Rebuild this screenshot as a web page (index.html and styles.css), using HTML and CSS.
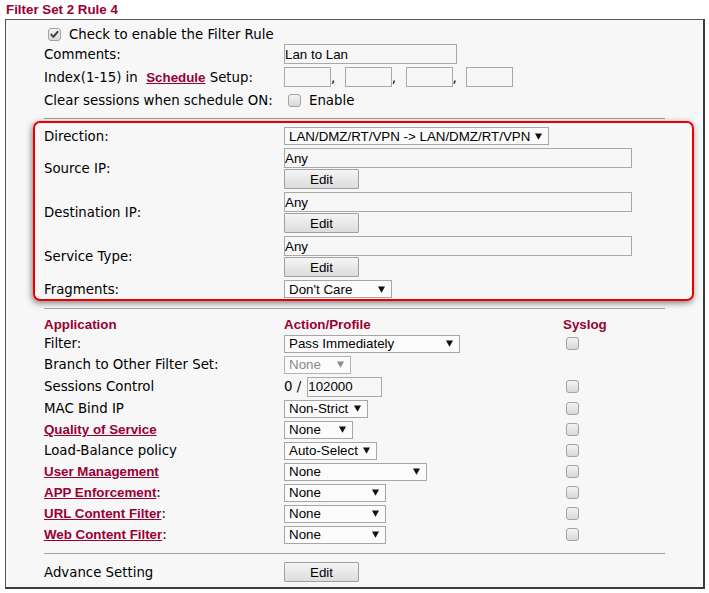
FILE: index.html
```html
<!DOCTYPE html>
<html>
<head>
<meta charset="utf-8">
<title>Filter Set 2 Rule 4</title>
<link rel="stylesheet" href="styles.css">
</head>
<body>
<div class="title">Filter Set 2 Rule 4</div>
<div class="panel">
  <div class="row-enable">
    <span class="cb"><svg width="11" height="11" viewBox="0 0 11 11"><path d="M2.3 5.6 L4.4 7.8 L8.6 2.8" fill="none" stroke="#3a3a3a" stroke-width="1.9" stroke-linecap="round" stroke-linejoin="round"/></svg></span>
    <span class="enable-text">Check to enable the Filter Rule</span>
  </div>
  <div class="grid r-comments">
    <span class="lbl">Comments:</span>
    <span class="ctl"><input class="inp w-comments" type="text" value="Lan to Lan"></span>
  </div>
  <div class="grid r-index">
    <span class="lbl">Index(1-15) in&nbsp; <a class="lnk" href="#">Schedule</a> Setup:</span>
    <span class="ctl">
      <input class="inp w-idx" type="text"><span class="comma">,</span><input class="inp w-idx" type="text"><span class="comma">,</span><input class="inp w-idx" type="text"><span class="comma">,</span><input class="inp w-idx" type="text">
    </span>
  </div>
  <div class="grid r-clear">
    <span class="lbl">Clear sessions when schedule ON:</span>
    <span class="ctl"><span class="cb cb-clear"></span><span class="enable-lbl">Enable</span></span>
  </div>
  <div class="hr hr-top"></div>

  <div class="redbox">
    <div class="grid r-dir">
      <span class="lbl">Direction:</span>
      <span class="ctl"><span class="sel w-dir"><span>LAN/DMZ/RT/VPN -&gt; LAN/DMZ/RT/VPN</span><svg class="arr" width="7" height="7" viewBox="0 0 7 7"><path d="M0 0.5 H7 L3.5 6.8 Z" fill="#111"/></svg></span></span>
    </div>
    <div class="grid r-ip r-first">
      <span class="lbl">Source IP:</span>
      <span class="ctl stack"><input class="inp w-ip" type="text" value="Any"><button class="btn" type="button">Edit</button></span>
    </div>
    <div class="grid r-ip">
      <span class="lbl">Destination IP:</span>
      <span class="ctl stack"><input class="inp w-ip" type="text" value="Any"><button class="btn" type="button">Edit</button></span>
    </div>
    <div class="grid r-ip">
      <span class="lbl">Service Type:</span>
      <span class="ctl stack"><input class="inp w-ip" type="text" value="Any"><button class="btn" type="button">Edit</button></span>
    </div>
    <div class="grid r-frag">
      <span class="lbl">Fragments:</span>
      <span class="ctl"><span class="sel w-frag"><span>Don't Care</span><svg class="arr" width="7" height="7" viewBox="0 0 7 7"><path d="M0 0.5 H7 L3.5 6.8 Z" fill="#111"/></svg></span></span>
    </div>
  </div>

  <div class="hr hr-mid"></div>

  <div class="grid3 r-head">
    <span class="hd">Application</span>
    <span class="hd">Action/Profile</span>
    <span class="hd">Syslog</span>
  </div>
  <div class="grid3 r-app">
    <span class="lbl">Filter:</span>
    <span class="ctl"><span class="sel w-filter"><span>Pass Immediately</span><svg class="arr" width="7" height="7" viewBox="0 0 7 7"><path d="M0 0.5 H7 L3.5 6.8 Z" fill="#111"/></svg></span></span>
    <span class="sys"><span class="cb"></span></span>
  </div>
  <div class="grid3 r-app">
    <span class="lbl">Branch to Other Filter Set:</span>
    <span class="ctl"><span class="sel sel-dis w-branch"><span>None</span><svg class="arr" width="7" height="7" viewBox="0 0 7 7"><path d="M0 0.5 H7 L3.5 6.8 Z" fill="#8c8c8c"/></svg></span></span>
    <span class="sys"></span>
  </div>
  <div class="grid3 r-app r-sess">
    <span class="lbl">Sessions Control</span>
    <span class="ctl"><span>0 /</span><input class="inp w-sess" type="text" value="102000"></span>
    <span class="sys"><span class="cb"></span></span>
  </div>
  <div class="grid3 r-app">
    <span class="lbl">MAC Bind IP</span>
    <span class="ctl"><span class="sel w-mac"><span>Non-Strict</span><svg class="arr" width="7" height="7" viewBox="0 0 7 7"><path d="M0 0.5 H7 L3.5 6.8 Z" fill="#111"/></svg></span></span>
    <span class="sys"><span class="cb"></span></span>
  </div>
  <div class="grid3 r-app">
    <span class="lbl"><a class="lnk" href="#">Quality of Service</a></span>
    <span class="ctl"><span class="sel w-qos"><span>None</span><svg class="arr" width="7" height="7" viewBox="0 0 7 7"><path d="M0 0.5 H7 L3.5 6.8 Z" fill="#111"/></svg></span></span>
    <span class="sys"><span class="cb"></span></span>
  </div>
  <div class="grid3 r-app">
    <span class="lbl">Load-Balance policy</span>
    <span class="ctl"><span class="sel w-lb"><span>Auto-Select</span><svg class="arr" width="7" height="7" viewBox="0 0 7 7"><path d="M0 0.5 H7 L3.5 6.8 Z" fill="#111"/></svg></span></span>
    <span class="sys"><span class="cb"></span></span>
  </div>
  <div class="grid3 r-app">
    <span class="lbl"><a class="lnk" href="#">User Management</a></span>
    <span class="ctl"><span class="sel w-um"><span>None</span><svg class="arr" width="7" height="7" viewBox="0 0 7 7"><path d="M0 0.5 H7 L3.5 6.8 Z" fill="#111"/></svg></span></span>
    <span class="sys"><span class="cb"></span></span>
  </div>
  <div class="grid3 r-app">
    <span class="lbl"><a class="lnk" href="#">APP Enforcement</a>:</span>
    <span class="ctl"><span class="sel w-app"><span>None</span><svg class="arr" width="7" height="7" viewBox="0 0 7 7"><path d="M0 0.5 H7 L3.5 6.8 Z" fill="#111"/></svg></span></span>
    <span class="sys"><span class="cb"></span></span>
  </div>
  <div class="grid3 r-app">
    <span class="lbl"><a class="lnk" href="#">URL Content Filter</a>:</span>
    <span class="ctl"><span class="sel w-app"><span>None</span><svg class="arr" width="7" height="7" viewBox="0 0 7 7"><path d="M0 0.5 H7 L3.5 6.8 Z" fill="#111"/></svg></span></span>
    <span class="sys"><span class="cb"></span></span>
  </div>
  <div class="grid3 r-app">
    <span class="lbl"><a class="lnk" href="#">Web Content Filter</a>:</span>
    <span class="ctl"><span class="sel w-app"><span>None</span><svg class="arr" width="7" height="7" viewBox="0 0 7 7"><path d="M0 0.5 H7 L3.5 6.8 Z" fill="#111"/></svg></span></span>
    <span class="sys"><span class="cb"></span></span>
  </div>

  <div class="hr hr-bot"></div>

  <div class="grid r-adv">
    <span class="lbl">Advance Setting</span>
    <span class="ctl"><button class="btn" type="button">Edit</button></span>
  </div>
</div>
</body>
</html>
```

FILE: styles.css
```css
html, body {
  margin: 0;
  padding: 0;
  background: #ffffff;
}

body {
  font-family: "DejaVu Sans", Verdana, sans-serif;
  font-size: 13.33px;
  color: #000;
}

.title {
  font-family: "Liberation Sans", Arial, sans-serif;
  font-weight: bold;
  font-size: 13.33px;
  color: #990033;
  height: 19px;
  line-height: 20px;
  padding-left: 6px;
}

.panel {
  box-sizing: border-box;
  width: 700px;
  margin-left: 5px;
  border: 1px solid #555;
  border-right: 2px solid #3c3c3c;
  border-bottom: 2px solid #3c3c3c;
  background: #f7f7f7;
  padding: 4px 0 4px 38px;
}

.row-enable {
  display: flex;
  align-items: center;
  height: 20px;
  margin-left: 4px;
}

.enable-text {
  margin-left: 8px;
}

.grid {
  display: grid;
  grid-template-columns: 240px 1fr;
  align-items: center;
}

.grid3 {
  display: grid;
  grid-template-columns: 240px 279px 1fr;
  align-items: center;
}

.lbl {
  white-space: nowrap;
}

.ctl {
  display: flex;
  align-items: center;
  white-space: nowrap;
}

.stack {
  flex-direction: column;
  align-items: flex-start;
  gap: 1px;
}

.lnk {
  font-family: "Liberation Sans", Arial, sans-serif;
  font-weight: bold;
  color: #990033;
  text-decoration: underline;
}

.hd {
  font-family: "Liberation Sans", Arial, sans-serif;
  font-weight: bold;
  color: #990033;
}

.r-comments { height: 20px; }
.r-index { height: 20px; margin-top: 3px; }
.r-clear { height: 22px; margin-top: 2px; }

.hr {
  width: 621px;
  height: 0;
  border-top: 1px solid #a0a0a0;
}

.hr-top { margin-top: 7px; }
.hr-mid { margin-top: 7px; }
.hr-bot { margin-top: 8px; }

.redbox {
  box-sizing: border-box;
  width: 661px;
  margin-left: -11px;
  margin-top: 2px;
  border: 2px solid #e80000;
  border-radius: 7px;
  padding: 3px 0 0 9px;
  box-shadow: -1px 2px 6px rgba(0, 0, 0, 0.5);
}

.r-dir { height: 20px; }
.r-ip { margin-top: 3px; }
.r-ip.r-first { margin-top: 2px; }
.r-frag { height: 20px; margin-top: 2px; }

.r-head { height: 18px; margin-top: 6px; }
.r-app { height: 21px; }
.r-sess { height: 23px; }
.r-adv { height: 22px; margin-top: 7px; }

.inp {
  box-sizing: border-box;
  height: 20px;
  border: 1px solid #a9a9a9;
  background: transparent;
  padding: 0;
  margin: 0;
  font-family: "Liberation Sans", Arial, sans-serif;
  font-size: 13.33px;
  color: #000;
  outline: none;
}

.w-comments { width: 173px; }
.w-idx { width: 47px; }
.w-ip { width: 348px; }
.w-sess { width: 75px; margin-left: 6px; }

.comma {
  margin-right: 9.5px;
}

.btn {
  box-sizing: border-box;
  width: 75px;
  height: 20px;
  margin: 0;
  padding: 0;
  border: 1px solid #a0a0a0;
  border-radius: 1px;
  background: linear-gradient(#f5f5f5, #dcdcdc);
  font-family: "Liberation Sans", Arial, sans-serif;
  font-size: 13.33px;
  color: #000;
}

.sel {
  box-sizing: border-box;
  display: flex;
  align-items: center;
  justify-content: space-between;
  height: 18px;
  border: 1px solid #a6a6a6;
  background: #fbfbfb;
  padding: 0 6px 0 4px;
  font-family: "Liberation Sans", Arial, sans-serif;
  font-size: 13.33px;
  color: #000;
}

.sel-dis {
  color: #8a8a8a;
  border-color: #b4b4b4;
}

.arr {
  flex: none;
  display: block;
}

.w-dir { width: 265px; }
.w-frag { width: 108px; }
.w-filter { width: 176px; }
.w-branch { width: 67px; }
.w-mac { width: 84px; }
.w-qos { width: 69px; }
.w-lb { width: 93px; }
.w-um { width: 143px; }
.w-app { width: 102px; }

.cb {
  box-sizing: border-box;
  display: inline-flex;
  align-items: center;
  justify-content: center;
  width: 13px;
  height: 13px;
  border: 1px solid #a3a3a3;
  border-radius: 3px;
  background: linear-gradient(#f3f3f3, #d8d8d8);
  flex: none;
}

.cb-clear { margin-left: 4px; }

.enable-lbl { margin-left: 8px; }

.sys {
  display: flex;
  align-items: center;
  padding-left: 3px;
}
```
